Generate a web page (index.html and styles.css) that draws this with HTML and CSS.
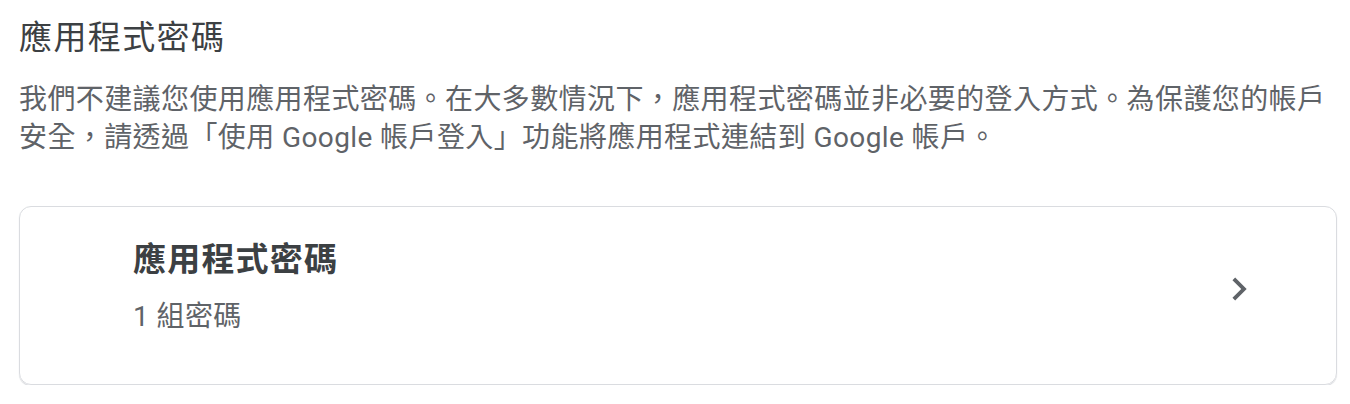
FILE: index.html
```html
<!DOCTYPE html>
<html lang="zh-Hant">
  <head>
    <meta charset="utf-8">
    <title>應用程式密碼</title>
    <link rel="stylesheet" href="styles.css">
  </head>
  <body>
    <h1 class="page-title">應用程式密碼</h1>
    <p class="intro">
      我們不建議您使用應用程式密碼。在大多數情況下，應用程式密碼並非必要的登入方式。為保護您的帳戶安全，請透過「使用 Google 帳戶登入」功能將應用程式連結到 Google 帳戶。
    </p>

    <a class="card" href="#">
      <div class="card-text">
        <div class="card-title">應用程式密碼</div>
        <div class="card-sub">1 組密碼</div>
      </div>
      <svg class="chevron" viewBox="0 0 24 24" width="46" height="46">
        <path d="M10 6L8.59 7.41 13.17 12l-4.58 4.59L10 18l6-6z" />
      </svg>
    </a>
  </body>
</html>
```

FILE: styles.css
```css
body {
  margin: 0;
  padding: 16px 13px 0 19px;
  font-family: Roboto, "Noto Sans CJK TC", sans-serif;
  color: #202124;
  background: #fff;
}
.page-title {
  margin: 0;
  font-size: 33px;
  font-weight: 400;
  line-height: 44px;
  letter-spacing: 1.4px;
  color: #3c4043;
}
.intro {
  margin: 21px 0 0;
  font-size: 28px;
  line-height: 37.5px;
  letter-spacing: 0.4px;
  color: #5f6368;
}
.card {
  display: flex;
  align-items: center;
  margin-top: 50px;
  padding: 31px 74px 48px 113px;
  border: 1px solid #dadce0;
  border-radius: 12px;
  box-shadow: 0 1px 1px 0 #d4d6da;
  text-decoration: none;
}
.card-text {
  flex: 1;
  display: flex;
  flex-direction: column;
  gap: 16px;
}
.card-title {
  font-size: 33px;
  font-weight: 700;
  line-height: 44px;
  letter-spacing: 1.2px;
  color: #3c4043;
}
.card-sub {
  font-size: 28px;
  line-height: 38px;
  letter-spacing: 0.4px;
  color: #5f6368;
}
.chevron {
  fill: #5f6368;
  margin-top: 4px;
}
```
